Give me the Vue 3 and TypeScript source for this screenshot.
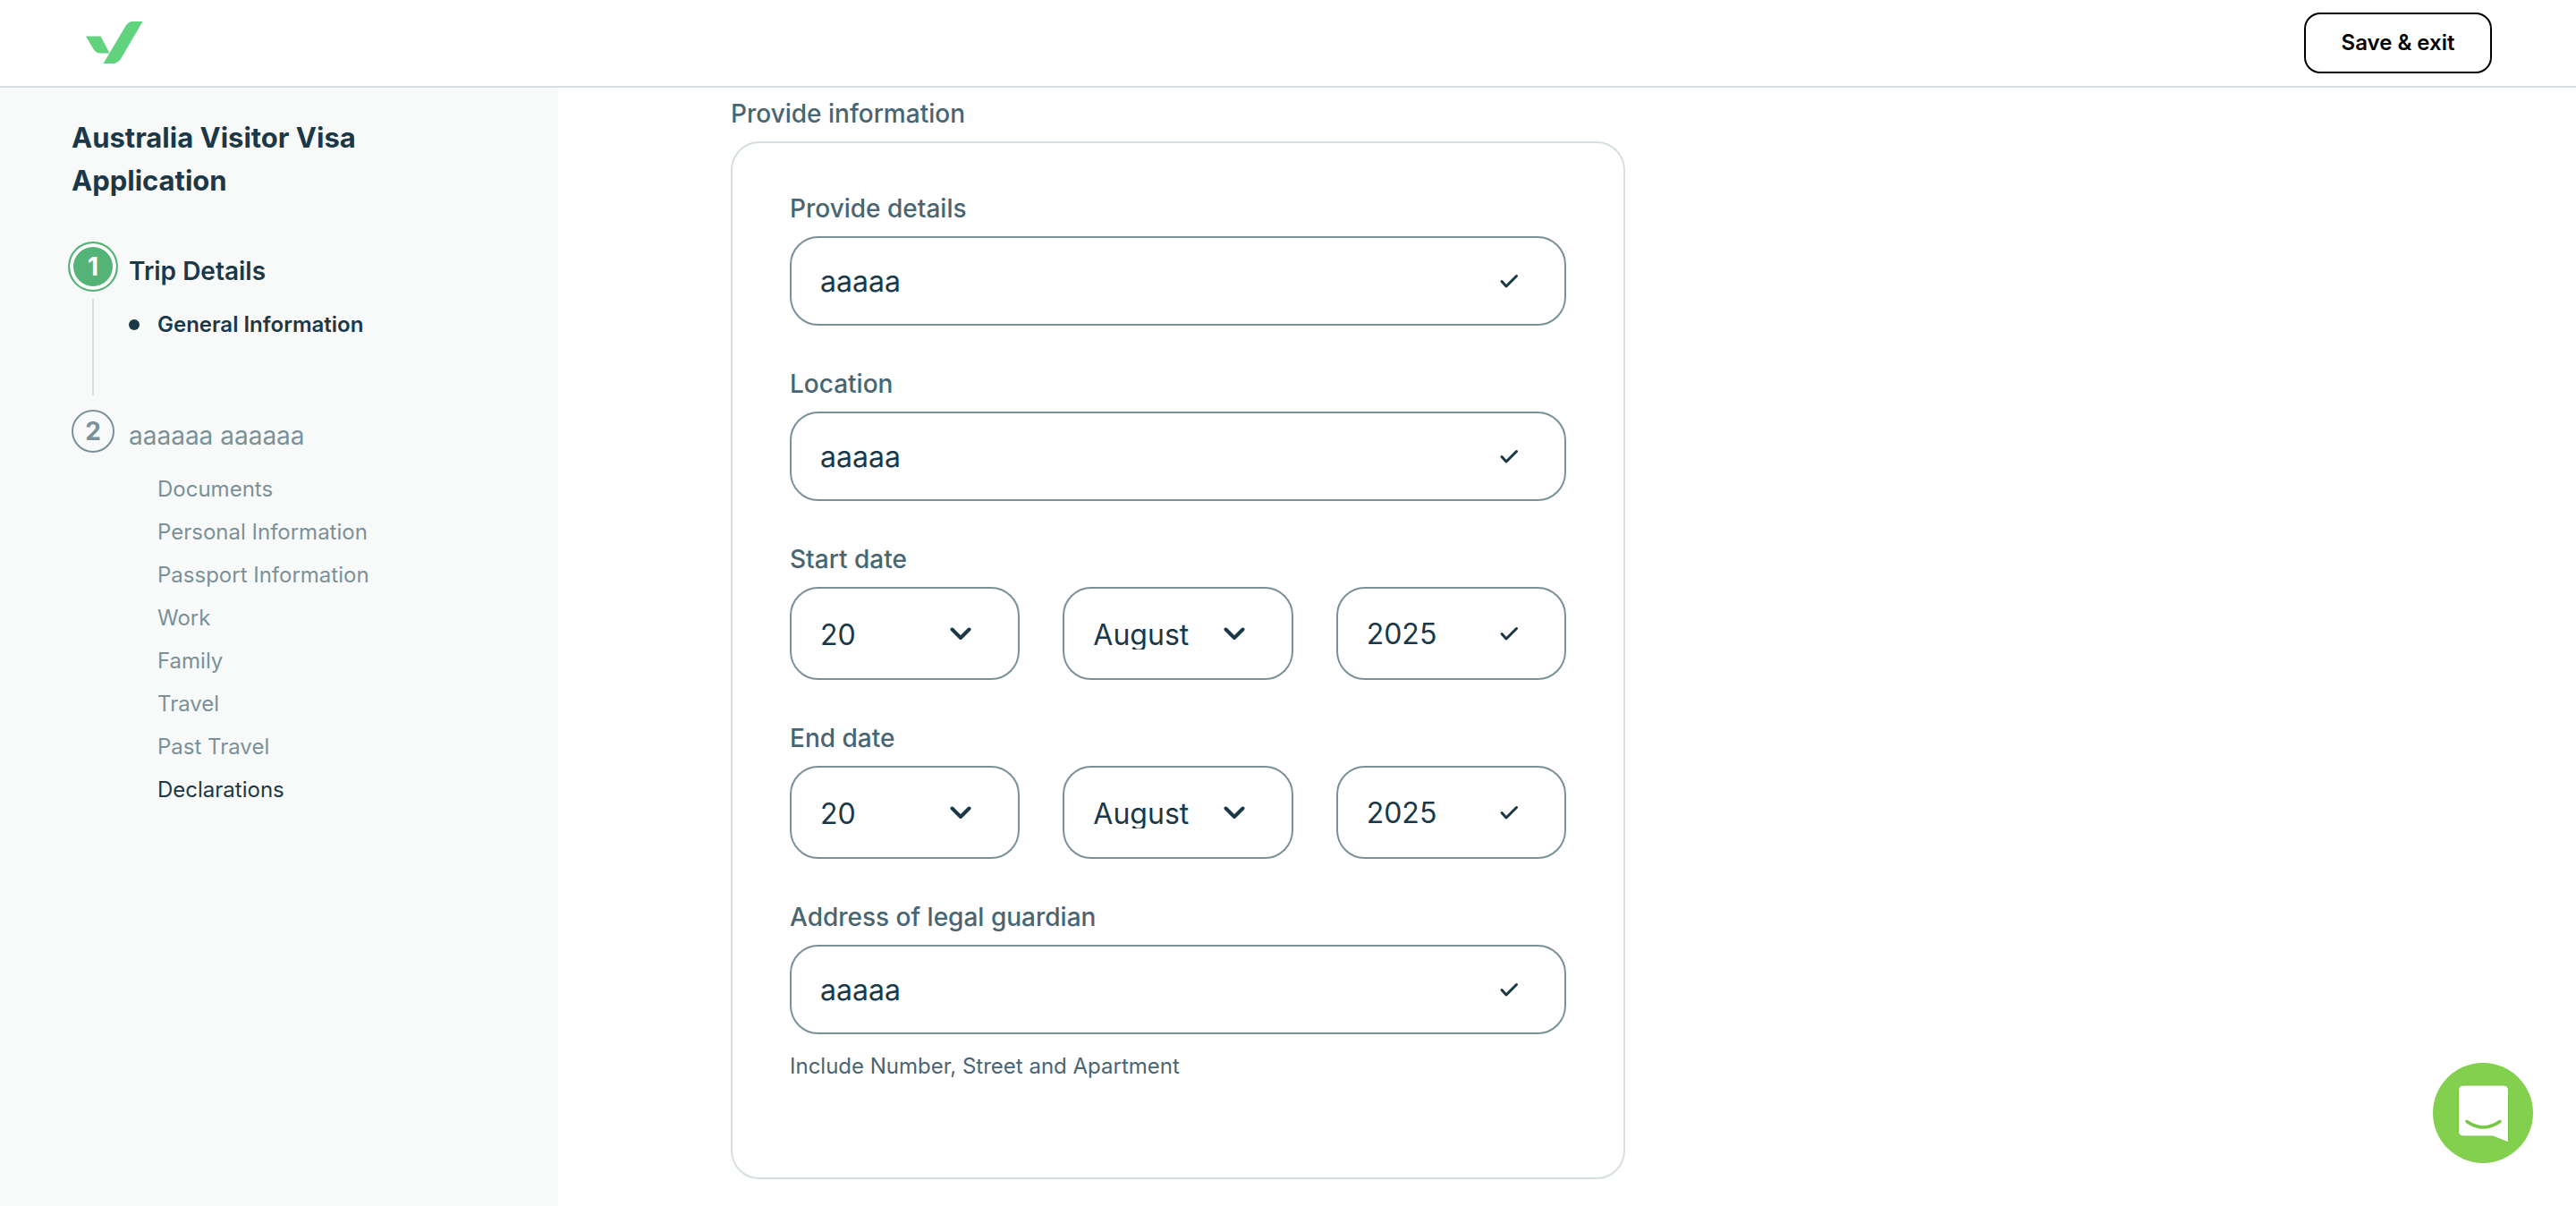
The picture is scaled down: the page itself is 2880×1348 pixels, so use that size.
<script setup lang="ts">
import { ref } from 'vue'

interface DateParts {
  day: string
  month: string
  year: string
}

interface SectionLink {
  label: string
  available?: boolean
}

const details = ref('aaaaa')
const location = ref('aaaaa')
const address = ref('aaaaa')
const startDate = ref<DateParts>({ day: '20', month: 'August', year: '2025' })
const endDate = ref<DateParts>({ day: '20', month: 'August', year: '2025' })

const dateGroups = [
  { id: 'start', label: 'Start date', value: startDate },
  { id: 'end', label: 'End date', value: endDate },
]

const days = Array.from({ length: 31 }, (_, i) => String(i + 1))
const months = [
  'January', 'February', 'March', 'April', 'May', 'June',
  'July', 'August', 'September', 'October', 'November', 'December',
]

const sections: SectionLink[] = [
  { label: 'Documents' },
  { label: 'Personal Information' },
  { label: 'Passport Information' },
  { label: 'Work' },
  { label: 'Family' },
  { label: 'Travel' },
  { label: 'Past Travel' },
  { label: 'Declarations', available: true },
]
</script>

<template>
  <div class="page">
    <header class="topbar">
      <a class="logo" href="#" aria-label="Home">
        <svg width="64" height="48" viewBox="0 0 64 48" fill="#61d27e">
          <path d="M0 16.500H16.500L26.500 35.500H17C13 35.500 10.500 34 8.500 31Z" />
          <path d="M63.500 0H53C49 0 46.500 1.500 44.500 5L19.500 47H29C34 47 37 45 39.500 41Z" />
        </svg>
      </a>
      <button class="save" type="button">Save &amp; exit</button>
    </header>

    <div class="body">
      <aside class="sidebar">
        <h1 class="title">Australia Visitor Visa Application</h1>

        <section class="step">
          <div class="rail">
            <span class="badge badge-active">1</span>
            <span class="line"></span>
          </div>
          <div class="step-content">
            <h2 class="step-name step-name-active">Trip Details</h2>
            <ul class="links">
              <li class="current"><a href="#">General Information</a></li>
            </ul>
          </div>
        </section>

        <section class="step">
          <div class="rail">
            <span class="badge">2</span>
          </div>
          <div class="step-content">
            <h2 class="step-name">aaaaaa aaaaaa</h2>
            <ul class="links">
              <li v-for="s in sections" :key="s.label" :class="{ available: s.available }">
                <a href="#">{{ s.label }}</a>
              </li>
            </ul>
          </div>
        </section>
      </aside>

      <main class="main">
        <form class="form" @submit.prevent>
          <p id="group-label" class="label">Provide information</p>
          <div class="card" role="group" aria-labelledby="group-label">
            <div class="field">
              <label class="label" for="details">Provide details</label>
              <div class="control">
                <input id="details" v-model="details" type="text" />
                <svg class="mark" viewBox="0 0 24 24"><path d="M4 12.500L9 18L20.500 6.500" /></svg>
              </div>
            </div>

            <div class="field">
              <label class="label" for="location">Location</label>
              <div class="control">
                <input id="location" v-model="location" type="text" />
                <svg class="mark" viewBox="0 0 24 24"><path d="M4 12.500L9 18L20.500 6.500" /></svg>
              </div>
            </div>

            <div v-for="g in dateGroups" :key="g.id" class="field">
              <label class="label" :for="g.id + '-day'">{{ g.label }}</label>
              <div class="date-row">
                <div class="control">
                  <select :id="g.id + '-day'" v-model="g.value.value.day">
                    <option v-for="d in days" :key="d">{{ d }}</option>
                  </select>
                  <svg class="mark chevron" viewBox="0 0 24 24"><path d="M2.500 7.500L12 17L21.500 7.500" /></svg>
                </div>
                <div class="control">
                  <select v-model="g.value.value.month" :aria-label="g.label + ' month'">
                    <option v-for="m in months" :key="m">{{ m }}</option>
                  </select>
                  <svg class="mark chevron" viewBox="0 0 24 24"><path d="M2.500 7.500L12 17L21.500 7.500" /></svg>
                </div>
                <div class="control">
                  <input v-model="g.value.value.year" class="tall" type="text" :aria-label="g.label + ' year'" />
                  <svg class="mark" viewBox="0 0 24 24"><path d="M4 12.500L9 18L20.500 6.500" /></svg>
                </div>
              </div>
            </div>

            <div class="field">
              <label class="label" for="address">Address of legal guardian</label>
              <div class="control">
                <input id="address" v-model="address" type="text" aria-describedby="address-help" />
                <svg class="mark" viewBox="0 0 24 24"><path d="M4 12.500L9 18L20.500 6.500" /></svg>
              </div>
              <p id="address-help" class="help">Include Number, Street and Apartment</p>
            </div>
          </div>
        </form>
      </main>
    </div>

    <button class="chat" type="button" aria-label="Open chat">
      <svg width="112" height="112" viewBox="0 0 112 112">
        <path
          d="M34 25H79Q84.500 25 84.500 31V89L67 82H34Q28.500 82 28.500 76V31Q28.500 25 34 25Z"
          fill="#fff" stroke="#76c843" stroke-width="1"
        />
        <path d="M38 65.500Q56 78.500 75 65.500" fill="none" stroke="#76c843" stroke-width="3.500" stroke-linecap="round" />
      </svg>
    </button>
  </div>
</template>

<style>
body {
  margin: 0;
  background: #fff;
}
</style>

<style scoped>
.page {
  display: flex;
  flex-direction: column;
  min-height: 100vh;
  font-family: Inter, 'Liberation Sans', sans-serif;
  color: #1a3847;
}

.page * {
  box-sizing: border-box;
}

h1,
h2,
p,
ul {
  margin: 0;
  padding: 0;
}

a {
  color: inherit;
  text-decoration: none;
}

.topbar {
  display: flex;
  align-items: center;
  justify-content: space-between;
  height: 98px;
  padding: 0 94px 0 96px;
  border-bottom: 2px solid #d5dfe1;
}

.logo,
.logo svg {
  display: block;
}

.save {
  width: 210px;
  height: 68px;
  padding: 0;
  border: 2px solid #000;
  border-radius: 18px;
  background: #fff;
  color: #000;
  font: 600 24px/32px Inter, 'Liberation Sans', sans-serif;
}

.body {
  display: flex;
  flex: 1;
}

.sidebar {
  flex: none;
  width: 624px;
  padding: 32px 144px 32px 76px;
  background: #f8faf9;
}

.title {
  padding-left: 4px;
  font-size: 31px;
  line-height: 48px;
  font-weight: 700;
}

.step {
  display: flex;
  gap: 12px;
}

.title + .step {
  margin-top: 44px;
  min-height: 184px;
}

.rail {
  display: flex;
  flex: none;
  flex-direction: column;
  align-items: center;
  gap: 8px;
  width: 56px;
}

.badge {
  display: flex;
  align-items: center;
  justify-content: center;
  width: 48px;
  height: 48px;
  margin-top: 4px;
  border: 2px solid #7b9199;
  border-radius: 50%;
  color: #7b9199;
  font-size: 28px;
  line-height: 32px;
  font-weight: 700;
}

.badge-active {
  width: 56px;
  height: 56px;
  margin-top: 0;
  border-color: #54b478;
  background: #54b478;
  box-shadow: inset 0 0 0 4px #fff;
  color: #fff;
}

.line {
  width: 2px;
  height: 108px;
  background: #d5dfe1;
}

.step-content {
  padding-top: 13px;
}

.step-name {
  color: #7b9199;
  font-size: 28px;
  line-height: 40px;
  font-weight: 400;
}

.step-name-active {
  color: #1a3847;
  font-weight: 600;
}

.links {
  margin-top: 16px;
  list-style: none;
  color: #7b9199;
  font-size: 24px;
  line-height: 48px;
}

.links li {
  display: flex;
  align-items: center;
  padding-left: 32px;
}

.links .current {
  gap: 20px;
  padding-left: 0;
  color: #1a3847;
  font-weight: 600;
}

.current::before {
  width: 12px;
  height: 12px;
  border-radius: 50%;
  background: #1a3847;
  content: '';
}

.links .available {
  color: #1a3847;
}

.main {
  flex: 1;
  padding: 10px 64px 30px 193px;
}

.form {
  max-width: 1000px;
}

.label {
  display: block;
  margin-bottom: 12px;
  color: #4a6572;
  font-size: 28px;
  line-height: 38px;
  font-weight: 500;
}

.card {
  display: flex;
  flex-direction: column;
  gap: 46px;
  padding: 54px 64px 106px;
  border: 2px solid #d5dfe1;
  border-radius: 32px;
}

.control {
  position: relative;
}

.control input,
.control select {
  display: block;
  width: 100%;
  height: 100px;
  margin: 0;
  padding: 0 80px 0 32px;
  border: 2px solid #7b9199;
  border-radius: 32px;
  outline: none;
  background: #fff;
  color: #1a3847;
  font: 400 32px/36px Inter, 'Liberation Sans', sans-serif;
}

.control select {
  height: 104px;
  padding: 34px 64px 32px 32px;
  overflow: clip;
  overflow-clip-margin: content-box;
  appearance: none;
}

.control .tall {
  height: 104px;
}

.mark {
  position: absolute;
  top: 50%;
  right: 52px;
  width: 24px;
  height: 24px;
  margin-top: -12px;
  fill: none;
  stroke: #1a3847;
  stroke-width: 3;
  stroke-linecap: round;
  stroke-linejoin: round;
  pointer-events: none;
}

.control .chevron {
  right: 54px;
  stroke-width: 4;
}

.date-row {
  display: grid;
  grid-template-columns: repeat(3, 1fr);
  gap: 48px;
}

.help {
  margin-top: 18px;
  color: #4a6572;
  font-size: 24px;
  line-height: 36px;
}

.chat {
  position: fixed;
  right: 48px;
  bottom: 48px;
  width: 112px;
  height: 112px;
  padding: 0;
  border: 0;
  border-radius: 50%;
  background: #82d04e;
}

.chat svg {
  display: block;
}
</style>
